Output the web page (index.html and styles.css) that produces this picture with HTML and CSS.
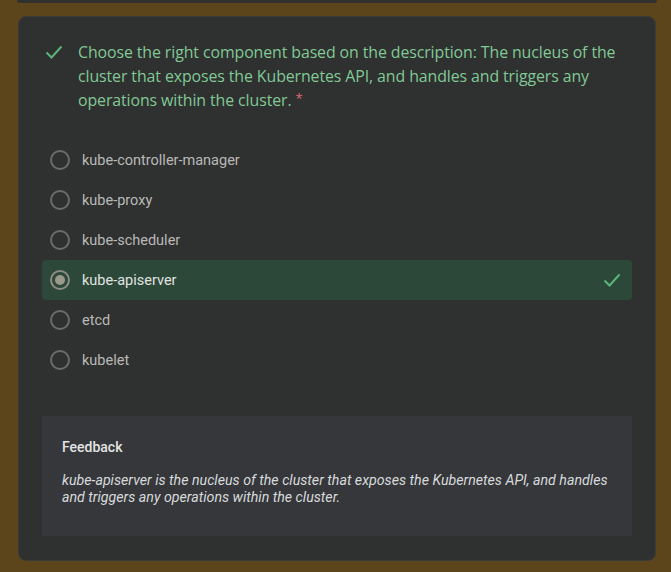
FILE: index.html
```html
<!DOCTYPE html>
<html>
<head>
<meta charset="utf-8">
<link rel="stylesheet" href="styles.css">
</head>
<body>
<div class="prev-card"></div>
<div class="card">
  <div class="question">
    <svg class="q-check" width="24" height="24" viewBox="0 0 24 24"><path d="M4.5 12.5l5 5L19.5 6.5" fill="none" stroke="#5bb57a" stroke-width="2"/></svg>
    <div class="q-text"><span class="q-sentence">Choose the right component based on the description: The nucleus of the cluster that exposes the Kubernetes API, and handles and triggers any operations within the cluster.</span><span class="req">*</span></div>
  </div>
  <div class="options">
    <div class="option"><span class="radio"></span><span class="label">kube-controller-manager</span></div>
    <div class="option"><span class="radio"></span><span class="label">kube-proxy</span></div>
    <div class="option"><span class="radio"></span><span class="label">kube-scheduler</span></div>
    <div class="option correct"><span class="radio checked"></span><span class="label">kube-apiserver</span>
      <svg class="opt-check" width="24" height="24" viewBox="0 0 24 24"><path d="M4.5 12.5l5 5L19.5 6.5" fill="none" stroke="#5bb57a" stroke-width="2"/></svg>
    </div>
    <div class="option"><span class="radio"></span><span class="label">etcd</span></div>
    <div class="option"><span class="radio"></span><span class="label">kubelet</span></div>
  </div>
  <div class="feedback">
    <div class="fb-title">Feedback</div>
    <div class="fb-text">kube-apiserver is the nucleus of the cluster that exposes the Kubernetes API, and handles and triggers any operations within the cluster.</div>
  </div>
</div>
</body>
</html>
```
FILE: styles.css
```css
html, body {
  margin: 0;
  padding: 0;
  background: #5d451b;
  height: 572px;
  overflow: hidden;
}
body {
  padding: 0 15px 0 18px;
  font-family: Roboto, "Liberation Sans", sans-serif;
}
.prev-card {
  height: 3px;
  margin: 0 -1px;
  background: #303030;
  border-radius: 0 0 8px 8px;
}
.card {
  margin-top: 13px;
  height: 545px;
  box-sizing: border-box;
  background: #2f3030;
  border: 1px solid #3b3b3a;
  border-radius: 8px;
  padding: 23px 23px 0 23px;
}
.question {
  display: flex;
  gap: 12px;
}
.q-check {
  flex: none;
}
.q-text {
  color: #81c995;
  font-family: "Open Sans", Roboto, sans-serif;
  font-size: 15.9px;
  line-height: 24px;
  letter-spacing: -0.1px;
}
.req {
  color: #e06a7a;
  margin-left: 4px;
  font-size: 13px;
  line-height: 13px;
  vertical-align: 3px;
}
.options {
  margin-top: 28px;
  display: flex;
  flex-direction: column;
}
.option {
  height: 40px;
  display: flex;
  align-items: center;
  padding: 0 8px;
  border-radius: 4px;
}
.option.correct {
  background: #2c4838;
}
.radio {
  width: 20px;
  height: 20px;
  box-sizing: border-box;
  border: 2px solid #6c6c6b;
  border-radius: 50%;
  flex: none;
  display: flex;
  align-items: center;
  justify-content: center;
}
.radio.checked {
  border-color: #8e8d85;
}
.radio.checked::after {
  content: "";
  width: 10px;
  height: 10px;
  border-radius: 50%;
  background: #9b998c;
}
.label {
  margin-left: 12px;
  font-size: 14.5px;
  color: #b9b9b7;
}
.correct .label {
  color: #e0e3e0;
}
.opt-check {
  margin-left: auto;
}
.feedback {
  margin-top: 36px;
  background: #35373a;
  height: 120px;
  box-sizing: border-box;
  padding: 21px 8px 0 20px;
}
.fb-title {
  font-size: 14px;
  line-height: 20px;
  font-weight: 500;
  color: #e3e3e3;
}
.fb-text {
  margin-top: 15px;
  font-size: 14.2px;
  line-height: 17px;
  font-style: italic;
  color: #d8dadc;
}
```
